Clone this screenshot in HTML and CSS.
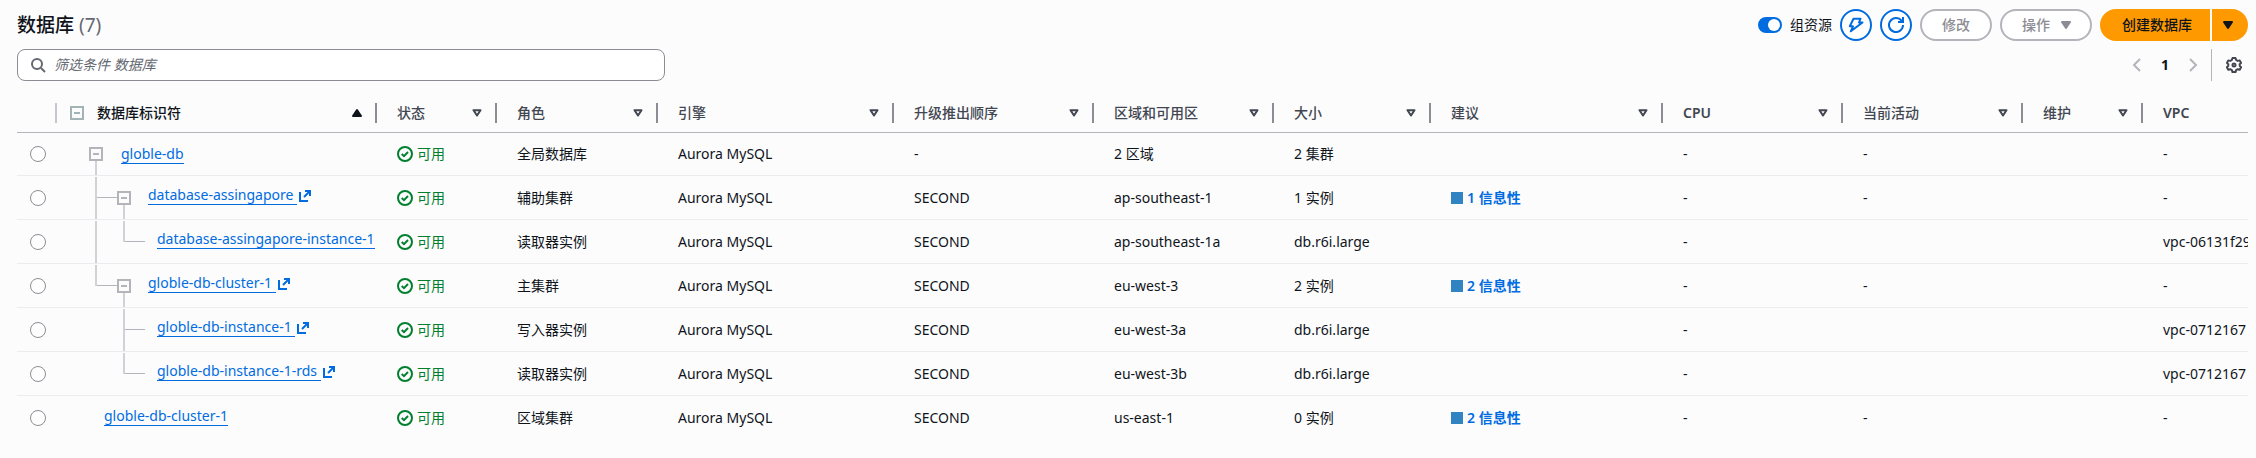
FILE: index.html
```html
<!DOCTYPE html>
<html lang="zh-CN">
<head>
    <meta charset="UTF-8">
    <meta name="viewport" content="width=device-width, initial-scale=1.0">
    <title>数据库</title>
    <link rel="stylesheet" href="styles.css">
</head>
<body>
    <!-- Shared icons -->
    <svg class="sprite" aria-hidden="true">
        <symbol id="sort" viewBox="0 0 16 16"><path d="M4.500 5.200h7L8 10.500z" fill="none" stroke="currentColor" stroke-width="2" stroke-linejoin="round"/></symbol>
        <symbol id="caret" viewBox="0 0 16 16"><path d="M4 5h8l-4 6z" fill="currentColor" stroke="currentColor" stroke-width="2" stroke-linejoin="round"/></symbol>
        <symbol id="caret-up" viewBox="0 0 16 16"><path d="M4 11h8L8 5z" fill="currentColor" stroke="currentColor" stroke-width="2" stroke-linejoin="round"/></symbol>
        <symbol id="ok" viewBox="0 0 16 16"><g fill="none" stroke="currentColor" stroke-width="2"><circle cx="8" cy="8" r="7"/><path d="M4.700 8l2.300 2.200 4-4.200"/></g></symbol>
        <symbol id="external" viewBox="0 0 16 16"><g fill="none" stroke="currentColor" stroke-width="2"><path d="M8 3h5v5M13 3L7 9M3 4v9h8"/></g></symbol>
        <symbol id="collapse" viewBox="0 0 14 14"><g fill="none" stroke="currentColor" stroke-width="2"><path d="M1 1h12v12H1zM4 7h6"/></g></symbol>
    </svg>

    <main class="panel">
        <header class="panel-header">
            <h1>数据库 <span class="count">(7)</span></h1>
            <div class="actions">
                <label class="toggle"><input type="checkbox" checked>组资源</label>
                <button type="button" class="btn btn-icon" aria-label="快速操作">
                    <svg viewBox="0 0 16 16"><path d="M5.500 1.700h7L11 5.500h3.500L2.800 14.300 5 9.300H1.800z" fill="none" stroke="currentColor" stroke-width="2" stroke-linejoin="round"/></svg>
                </button>
                <button type="button" class="btn btn-icon" aria-label="刷新">
                    <svg viewBox="0 0 16 16"><path d="M10 5h5V0M15 8a7 7 0 1 1-1.500-4.300L15 5" fill="none" stroke="currentColor" stroke-width="2"/></svg>
                </button>
                <button type="button" class="btn" disabled>修改</button>
                <button type="button" class="btn btn-menu" disabled>操作 <svg><use href="#caret"/></svg></button>
                <div class="btn-group">
                    <button type="button" class="btn btn-menu btn-primary">创建数据库</button>
                    <button type="button" class="btn btn-primary btn-caret" aria-label="更多创建选项"><svg><use href="#caret"/></svg></button>
                </div>
            </div>
        </header>

        <div class="tools">
            <label class="search">
                <svg viewBox="0 0 16 16"><g fill="none" stroke="currentColor" stroke-width="2"><circle cx="7" cy="7" r="5"/><path d="M11 11l4 4"/></g></svg>
                <input type="search" placeholder="筛选条件 数据库" aria-label="筛选条件 数据库">
            </label>
            <nav class="pagination">
                <button type="button" class="page-arrow" aria-label="上一页" disabled><svg viewBox="0 0 16 16"><path d="M11 2L5 8l6 6" fill="none" stroke="currentColor" stroke-width="2"/></svg></button>
                <button type="button" class="page">1</button>
                <button type="button" class="page-arrow" aria-label="下一页" disabled><svg viewBox="0 0 16 16"><path d="M5 2l6 6-6 6" fill="none" stroke="currentColor" stroke-width="2"/></svg></button>
                <button type="button" class="settings" aria-label="首选项">
                    <svg viewBox="0 0 16 16"><g fill="none" stroke="currentColor" stroke-width="2" stroke-linejoin="round"><path d="M6.500 1h3l.6 2 1.600.9 2-.5 1.400 2.500L13.700 7.300v1.500l1.400 1.400-1.400 2.500-2-.5-1.600.9-.6 2h-3l-.6-2-1.600-.9-2 .5L.9 10.200l1.400-1.400V7.300L.9 5.900l1.400-2.500 2 .5L5.900 3z"/><circle cx="8" cy="8" r="1.500"/></g></svg>
                </button>
            </nav>
        </div>

        <div class="table-wrap">
            <table>
                <colgroup>
                    <col class="w-select"><col class="w-id"><col class="w-status"><col class="w-role"><col class="w-engine"><col class="w-order"><col class="w-region"><col class="w-size"><col class="w-advice"><col class="w-cpu"><col class="w-activity"><col class="w-maint"><col class="w-vpc">
                </colgroup>
                <thead>
                    <tr>
                        <th class="light"></th>
                        <th class="sorted"><div class="head"><button type="button" class="expander" aria-label="全部折叠"><svg><use href="#collapse"/></svg></button>数据库标识符<svg class="sort"><use href="#caret-up"/></svg></div></th>
                        <th><div class="head">状态<svg class="sort"><use href="#sort"/></svg></div></th>
                        <th><div class="head">角色<svg class="sort"><use href="#sort"/></svg></div></th>
                        <th><div class="head">引擎<svg class="sort"><use href="#sort"/></svg></div></th>
                        <th><div class="head">升级推出顺序<svg class="sort"><use href="#sort"/></svg></div></th>
                        <th><div class="head">区域和可用区<svg class="sort"><use href="#sort"/></svg></div></th>
                        <th><div class="head">大小<svg class="sort"><use href="#sort"/></svg></div></th>
                        <th><div class="head">建议<svg class="sort"><use href="#sort"/></svg></div></th>
                        <th><div class="head latin">CPU<svg class="sort"><use href="#sort"/></svg></div></th>
                        <th><div class="head">当前活动<svg class="sort"><use href="#sort"/></svg></div></th>
                        <th><div class="head">维护<svg class="sort"><use href="#sort"/></svg></div></th>
                        <th><div class="head latin">VPC</div></th>
                    </tr>
                </thead>
                <tbody>
                    <tr>
                        <td><input type="radio" name="db" aria-label="globle-db"></td>
                        <td><div class="tree"><span class="node root"><button type="button" class="expander" aria-label="折叠"><svg><use href="#collapse"/></svg></button></span><a href="#">globle-db</a></div></td>
                        <td><span class="status"><svg><use href="#ok"/></svg>可用</span></td>
                        <td>全局数据库</td><td>Aurora MySQL</td><td>-</td><td>2 区域</td><td>2 集群</td><td></td><td>-</td><td>-</td><td></td><td>-</td>
                    </tr>
                    <tr>
                        <td><input type="radio" name="db" aria-label="database-assingapore"></td>
                        <td><div class="tree"><span class="line tee"></span><span class="node"><button type="button" class="expander" aria-label="折叠"><svg><use href="#collapse"/></svg></button></span><a href="#" class="raised">database-assingapore&nbsp;</a><svg class="external"><use href="#external"/></svg></div></td>
                        <td><span class="status"><svg><use href="#ok"/></svg>可用</span></td>
                        <td>辅助集群</td><td>Aurora MySQL</td><td>SECOND</td><td>ap-southeast-1</td><td>1 实例</td><td><a href="#" class="advice">1 信息性</a></td><td>-</td><td>-</td><td></td><td>-</td>
                    </tr>
                    <tr>
                        <td><input type="radio" name="db" aria-label="database-assingapore-instance-1"></td>
                        <td><div class="tree"><span class="line pass"></span><span class="line end leaf"></span><a href="#" class="raised">database-assingapore-instance-1</a></div></td>
                        <td><span class="status"><svg><use href="#ok"/></svg>可用</span></td>
                        <td>读取器实例</td><td>Aurora MySQL</td><td>SECOND</td><td>ap-southeast-1a</td><td>db.r6i.large</td><td></td><td>-</td><td></td><td></td><td>vpc-06131f29</td>
                    </tr>
                    <tr>
                        <td><input type="radio" name="db" aria-label="globle-db-cluster-1"></td>
                        <td><div class="tree"><span class="line end"></span><span class="node"><button type="button" class="expander" aria-label="折叠"><svg><use href="#collapse"/></svg></button></span><a href="#" class="raised">globle-db-cluster-1&nbsp;</a><svg class="external"><use href="#external"/></svg></div></td>
                        <td><span class="status"><svg><use href="#ok"/></svg>可用</span></td>
                        <td>主集群</td><td>Aurora MySQL</td><td>SECOND</td><td>eu-west-3</td><td>2 实例</td><td><a href="#" class="advice">2 信息性</a></td><td>-</td><td>-</td><td></td><td>-</td>
                    </tr>
                    <tr>
                        <td><input type="radio" name="db" aria-label="globle-db-instance-1"></td>
                        <td><div class="tree"><span class="line"></span><span class="line tee leaf"></span><a href="#" class="raised">globle-db-instance-1&nbsp;</a><svg class="external"><use href="#external"/></svg></div></td>
                        <td><span class="status"><svg><use href="#ok"/></svg>可用</span></td>
                        <td>写入器实例</td><td>Aurora MySQL</td><td>SECOND</td><td>eu-west-3a</td><td>db.r6i.large</td><td></td><td>-</td><td></td><td></td><td>vpc-0712167</td>
                    </tr>
                    <tr>
                        <td><input type="radio" name="db" aria-label="globle-db-instance-1-rds"></td>
                        <td><div class="tree"><span class="line"></span><span class="line end leaf"></span><a href="#" class="raised">globle-db-instance-1-rds&nbsp;</a><svg class="external"><use href="#external"/></svg></div></td>
                        <td><span class="status"><svg><use href="#ok"/></svg>可用</span></td>
                        <td>读取器实例</td><td>Aurora MySQL</td><td>SECOND</td><td>eu-west-3b</td><td>db.r6i.large</td><td></td><td>-</td><td></td><td></td><td>vpc-0712167</td>
                    </tr>
                    <tr>
                        <td><input type="radio" name="db" aria-label="globle-db-cluster-1"></td>
                        <td><div class="tree flat"><a href="#" class="raised">globle-db-cluster-1</a></div></td>
                        <td><span class="status"><svg><use href="#ok"/></svg>可用</span></td>
                        <td>区域集群</td><td>Aurora MySQL</td><td>SECOND</td><td>us-east-1</td><td>0 实例</td><td><a href="#" class="advice">2 信息性</a></td><td>-</td><td>-</td><td></td><td>-</td>
                    </tr>
                </tbody>
            </table>
        </div>
    </main>
</body>
</html>
```
FILE: styles.css
```css
* {
    margin: 0;
    padding: 0;
    box-sizing: border-box;
}

body {
    background: #fcfcfd;
    color: #0f141a;
    font-family: "Noto Sans", "Noto Sans CJK SC", sans-serif;
    font-size: 14px;
    line-height: 20px;
}

button,
input {
    font: inherit;
}

button {
    background: none;
    border: none;
    color: inherit;
    cursor: pointer;
}

svg {
    display: block;
    flex: none;
    width: 16px;
    height: 16px;
}

.sprite {
    position: absolute;
    width: 0;
    height: 0;
}

a {
    color: #006ce0;
    text-decoration: none;
}

.panel {
    padding: 9px 8px 0 17px;
}

.panel-header,
.tools,
.actions,
.pagination {
    display: flex;
    align-items: center;
}

.panel-header,
.tools {
    justify-content: space-between;
}

h1 {
    font-size: 19px;
    line-height: 24px;
    font-weight: 500;
}

.count {
    color: #656871;
    font-weight: 400;
}

.actions {
    gap: 8px;
}

.toggle {
    display: flex;
    align-items: center;
    gap: 8px;
}

.toggle input {
    appearance: none;
    display: flex;
    justify-content: flex-end;
    width: 24px;
    height: 16px;
    padding: 2px;
    border-radius: 8px;
    background: #006ce0;
}

.toggle input::before {
    content: "";
    width: 12px;
    height: 12px;
    border-radius: 50%;
    background: #fff;
}

.btn {
    display: flex;
    align-items: center;
    justify-content: center;
    gap: 8px;
    height: 32px;
    padding: 0 20px;
    border: 2px solid #006ce0;
    border-radius: 16px;
    background: #fff;
    color: #006ce0;
    font-weight: 500;
}

.btn:disabled {
    border-color: #b4b4bb;
    color: #8c8c94;
}

.btn-icon {
    width: 32px;
    padding: 0;
}

.btn-menu {
    padding-right: 16px;
}

.btn-group {
    display: flex;
    gap: 2px;
}

.btn-primary {
    border-color: #ff9900;
    border-radius: 16px 0 0 16px;
    background: #ff9900;
    color: #0f141a;
}

.btn-caret {
    width: 36px;
    padding: 0 4px 0 0;
    border-radius: 0 16px 16px 0;
}

.tools {
    margin-top: 8px;
}

.search {
    display: flex;
    align-items: center;
    gap: 8px;
    width: 100%;
    max-width: 648px;
    height: 32px;
    padding: 0 12px;
    border: 1px solid #8c8c94;
    border-radius: 8px;
    background: #fff;
    color: #656871;
}

.search input {
    flex: 1;
    border: none;
    outline: none;
    background: none;
}

.search input::placeholder {
    color: #656871;
    font-style: italic;
}

.page-arrow {
    width: 16px;
    color: #b4b4bb;
}

.page {
    width: 40px;
    font-weight: 700;
}

.settings {
    display: flex;
    align-items: center;
    height: 32px;
    margin-left: 10px;
    padding: 0 6px 0 14px;
    border-left: 1px solid #b4b4bb;
    color: #424650;
}

.table-wrap {
    margin-top: 12px;
    overflow: hidden;
}

table {
    width: 100%;
    border-collapse: separate;
    border-spacing: 0;
    table-layout: fixed;
}

.w-select { width: 40px; }
.w-id { width: 320px; }
.w-status { width: 120px; }
.w-role { width: 161px; }
.w-engine { width: 236px; }
.w-order { width: 200px; }
.w-region { width: 180px; }
.w-size { width: 157px; }
.w-advice { width: 232px; }
.w-cpu { width: 180px; }
.w-activity { width: 180px; }
.w-maint { width: 120px; }

th {
    height: 40px;
    padding: 0;
    border-bottom: 1px solid #b4b4bb;
    color: #424650;
    font-weight: 500;
    text-align: left;
}

th .head {
    display: flex;
    align-items: center;
    height: 20px;
    padding: 0 10px 0 20px;
    border-right: 2px solid #8c8c94;
}

th .latin {
    font-weight: 600;
}

th.light {
    background: linear-gradient(#c6c6cd, #c6c6cd) right center / 2px 20px no-repeat;
}

th:last-child .head {
    border-right: none;
}

.sorted {
    color: #0f141a;
}

.sorted .head {
    padding-left: 13px;
}

.sort {
    margin-left: auto;
}

.expander {
    color: #b4b4bb;
}

.expander svg {
    width: 14px;
    height: 14px;
}

th .expander {
    margin-right: 13px;
    color: #a2b4b6;
}

td {
    height: 44px;
    padding: 0 0 0 20px;
    border-bottom: 1px solid #ebebf0;
    white-space: nowrap;
}

tbody tr:first-child td {
    height: 43px;
}

tr:last-child td {
    border-bottom: none;
}

td:first-child {
    padding-left: 13px;
}

td:nth-child(2) {
    padding: 0;
}

td input[type="radio"] {
    appearance: none;
    display: block;
    width: 16px;
    height: 16px;
    border: 1px solid #8c8c94;
    border-radius: 50%;
    background: #fff;
}

/* Tree column: connector lines are drawn from 28px wide cells */
.tree {
    display: flex;
    align-items: center;
    height: 42px;
    padding-left: 32px;
}

.tree a {
    border-bottom: 1px solid #006ce0;
    line-height: 18px;
}

.tree .raised,
.external {
    margin-bottom: 4px;
}

.line,
.node {
    flex: none;
    width: 28px;
    height: 42px;
}

.line {
    --v: linear-gradient(#d1d1d8, #d1d1d8);
    --h: linear-gradient(#b4b4bb, #b4b4bb);
    background-repeat: no-repeat;
}

.pass {
    background-image: var(--v);
    background-position: 6px 0;
    background-size: 2px 100%;
}

.tee {
    background-image: var(--v), var(--h);
    background-position: 6px 0, 6px 20px;
    background-size: 2px 100%, 22px 1px;
}

.end {
    background-image: var(--v), var(--h);
    background-position: 6px 0, 6px 20px;
    background-size: 2px 21px, 22px 1px;
}

.leaf {
    width: 40px;
}

.node {
    display: flex;
    align-items: center;
    width: 31px;
    background: linear-gradient(#d1d1d8, #d1d1d8) 6px 100% / 2px 14px no-repeat;
}

.root {
    width: 32px;
}

.flat {
    padding-left: 47px;
}

.external {
    color: #006ce0;
}

.status {
    display: flex;
    align-items: center;
    gap: 4px;
    color: #00802f;
}

.advice {
    display: flex;
    align-items: center;
    gap: 4px;
    font-weight: 600;
}

.advice::before {
    content: "";
    width: 12px;
    height: 12px;
    background: #3184c2;
}
```
